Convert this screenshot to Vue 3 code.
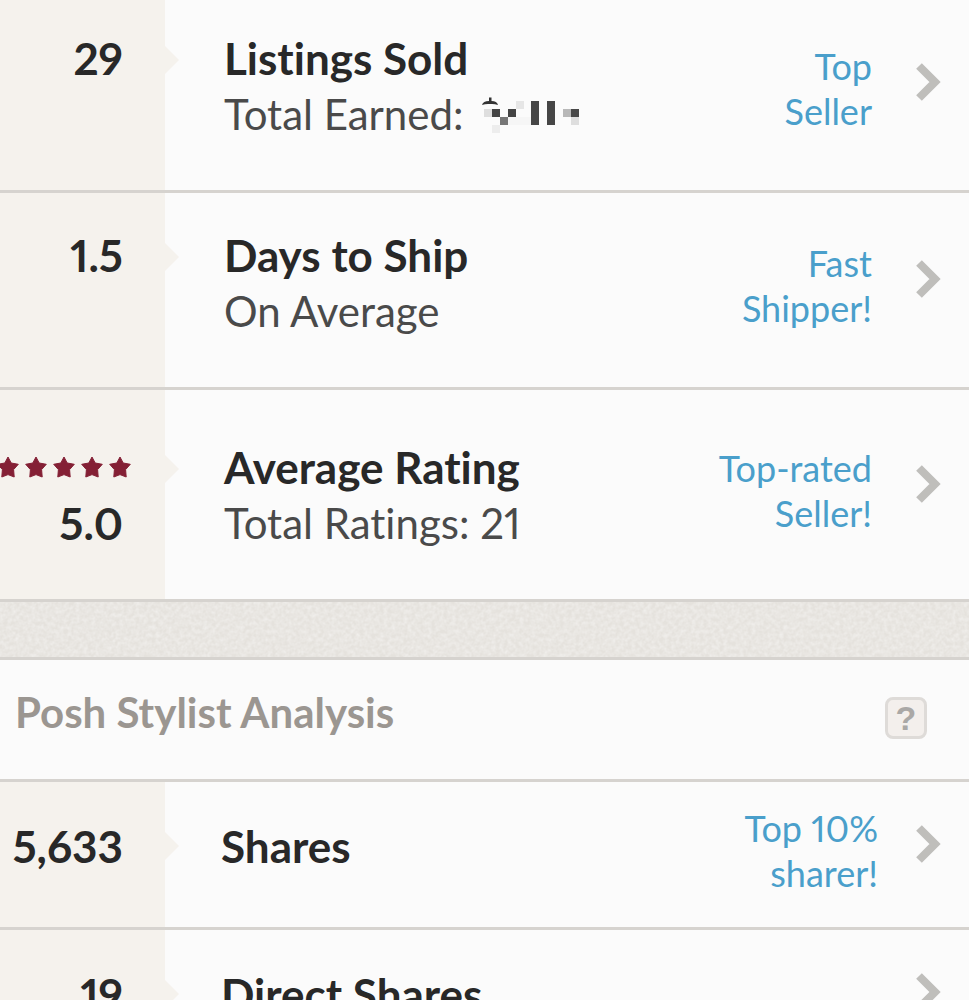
<template>
  <main class="stats-page">
    <section class="stats-list seller">
      <a v-for="stat in sellerStats" :key="stat.title" href="#" class="stat-row">
        <div class="stat-value" :class="{ rated: stat.stars }">
          <div v-if="stat.stars" class="stars">
            <svg v-for="n in stat.stars" :key="n" class="star" viewBox="0 0 22 22">
              <path
                d="M11 1 L14.2 7 L21.3 8.3 L16.6 13.600 L17.2 21 L11 18.6 L4.8 21 L5.4 13.600 L0.7 8.3 L7.8 7 Z"
              />
            </svg>
          </div>
          <span>{{ stat.value }}</span>
        </div>
        <div class="stat-text" :class="{ rated: stat.stars }">
          <h3>{{ stat.title }}</h3>
          <p>
            {{ stat.subtitle }}
            <svg v-if="stat.masked" class="masked" viewBox="0 0 102 40">
              <path
                d="M2 11 Q3 7 9 7 L9 3.5 L11.5 3.5 L11.5 7 Q17 7 18 11 Q14 9.500 10 10 Q6 9.500 2 11 Z"
                fill="#333"
              />
              <rect
                v-for="(b, i) in maskBlocks"
                :key="i"
                :x="b[0]"
                :y="b[1]"
                :width="b[2]"
                :height="b[3]"
                :fill="b[4]"
              />
            </svg>
          </p>
        </div>
        <div class="stat-badge">
          <span v-for="line in stat.badge" :key="line">{{ line }}</span>
        </div>
        <svg class="chevron" viewBox="0 0 25 38">
          <path d="M3 3 L19 19 L3 35" />
        </svg>
      </a>
    </section>

    <div class="divider">
      <svg width="100%" height="100%">
        <filter id="paper">
          <feTurbulence type="fractalNoise" baseFrequency="0.25" numOctaves="3" />
          <feColorMatrix
            values="0 0 0 0 1  0 0 0 0 1  0 0 0 0 1  0.7 0 0 0 -0.2"
          />
        </filter>
        <rect width="100%" height="100%" filter="url(#paper)" />
      </svg>
    </div>

    <header class="section-header">
      <h2>Posh Stylist Analysis</h2>
      <button type="button" class="help">?</button>
    </header>

    <section class="stats-list stylist">
      <a v-for="stat in stylistStats" :key="stat.title" href="#" class="stat-row">
        <div class="stat-value">
          <span>{{ stat.value }}</span>
        </div>
        <div class="stat-text">
          <h3>{{ stat.title }}</h3>
        </div>
        <div class="stat-badge">
          <span v-for="line in stat.badge" :key="line">{{ line }}</span>
        </div>
        <svg class="chevron" viewBox="0 0 25 38">
          <path d="M3 3 L19 19 L3 35" />
        </svg>
      </a>
    </section>
  </main>
</template>

<script setup>
import { ref } from "vue";

const sellerStats = ref([
  {
    value: "29",
    title: "Listings Sold",
    subtitle: "Total Earned:",
    masked: true,
    badge: ["Top", "Seller"],
  },
  {
    value: "1.5",
    title: "Days to Ship",
    subtitle: "On Average",
    badge: ["Fast", "Shipper!"],
  },
  {
    value: "5.0",
    stars: 5,
    title: "Average Rating",
    subtitle: "Total Ratings: 21",
    badge: ["Top-rated", "Seller!"],
  },
]);

const stylistStats = ref([
  { value: "5,633", title: "Shares", badge: ["Top 10%", "sharer!"] },
  { value: "19", title: "Direct Shares", badge: [] },
]);

// x, y, width, height, colour of the blocks hiding the amount
const maskBlocks = [
  [4, 15, 8, 8, "#dedede"],
  [12, 15, 8, 8, "#444"],
  [28, 15, 8, 8, "#444"],
  [20, 23, 8, 8, "#777"],
  [12, 31, 8, 8, "#ededed"],
  [36, 7, 8, 8, "#e6e6e6"],
  [28, 23, 24, 8, "#f6f6f6"],
  [51, 7, 8, 24, "#464646"],
  [67, 7, 8, 24, "#464646"],
  [83, 15, 8, 8, "#b8b8b8"],
  [91, 15, 8, 8, "#484848"],
  [91, 23, 8, 8, "#dedede"],
];
</script>

<style>
body {
  margin: 0;
  background: #fbfbfb;
}
</style>

<style scoped>
.stats-page {
  height: 100vh;
  overflow: hidden;
  background: #fbfbfb;
  font-family: Lato, "Liberation Sans", sans-serif;
  font-variant-ligatures: none;
  font-variant-numeric: proportional-nums;
  color: #282828;
}

h2,
h3,
p {
  margin: 0;
}

.seller {
  margin-top: -4px;
}

.stat-row {
  display: flex;
  box-sizing: border-box;
  border-bottom: 3px solid #d6d3cf;
  color: inherit;
  text-decoration: none;
}

.stat-value {
  position: relative;
  box-sizing: border-box;
  flex: 0 0 165px;
  min-width: 0;
  display: flex;
  flex-direction: column;
  align-items: flex-end;
  padding: 34px 42px 48px 0;
  background: #f5f2ed;
  font-size: 44px;
  font-weight: 700;
  line-height: 56px;
}

.stat-value::after {
  content: "";
  position: absolute;
  left: 100%;
  top: 50px;
  border: 14px solid transparent;
  border-left: 14px solid #f5f2ed;
  border-right: 0;
}

.stat-value.rated,
.stat-text.rated {
  padding-top: 49px;
}

.stat-value.rated::after {
  top: 65px;
}

.stars {
  display: flex;
  align-items: center;
  gap: 6px;
  height: 56px;
  margin-right: -8px;
}

.star {
  flex: none;
  width: 22px;
  height: 22px;
  fill: #842035;
  stroke: #842035;
  stroke-linejoin: round;
}

.stat-text {
  flex: 1;
  padding: 34px 0 48px 59px;
  line-height: 56px;
}

.stat-text h3 {
  font-size: 44px;
  font-weight: 700;
}

.stat-text p {
  display: flex;
  align-items: center;
  gap: 16px;
  font-size: 42px;
  font-weight: 400;
  color: #4a4a4a;
}

.masked {
  width: 102px;
  height: 40px;
}

.stat-badge {
  display: flex;
  flex-direction: column;
  justify-content: center;
  padding: 0 44px 8px 0;
  font-size: 36px;
  line-height: 45px;
  text-align: right;
  color: #4a9fcb;
}

.chevron {
  align-self: center;
  flex: none;
  width: 25px;
  height: 38px;
  margin: 0 28px 22px 0;
  fill: none;
  stroke: #bfbebb;
  stroke-width: 8;
}

.divider {
  height: 55px;
  border-bottom: 3px solid #d6d3cf;
  background: #e5e2dd;
}

.divider svg {
  display: block;
}

.section-header {
  display: flex;
  align-items: center;
  justify-content: space-between;
  height: 119px;
  padding: 0 42px 0 15px;
  border-bottom: 3px solid #d6d3cf;
}

.section-header h2 {
  padding-bottom: 16px;
  font-size: 42px;
  font-weight: 700;
  line-height: 56px;
  color: #9b9691;
}

.help {
  width: 42px;
  height: 42px;
  margin-bottom: 4px;
  padding: 0;
  border: 3px solid #dedbd8;
  border-radius: 8px;
  background: #f3efec;
  font-family: "Liberation Sans", sans-serif;
  font-size: 34px;
  font-weight: 700;
  line-height: 36px;
  color: #aaa8a6;
}

.stylist .stat-value,
.stylist .stat-text {
  padding-top: 36px;
  padding-bottom: 53px;
}

.stylist .stat-text {
  padding-left: 56px;
}

.stylist .stat-badge {
  padding-right: 38px;
}
</style>
